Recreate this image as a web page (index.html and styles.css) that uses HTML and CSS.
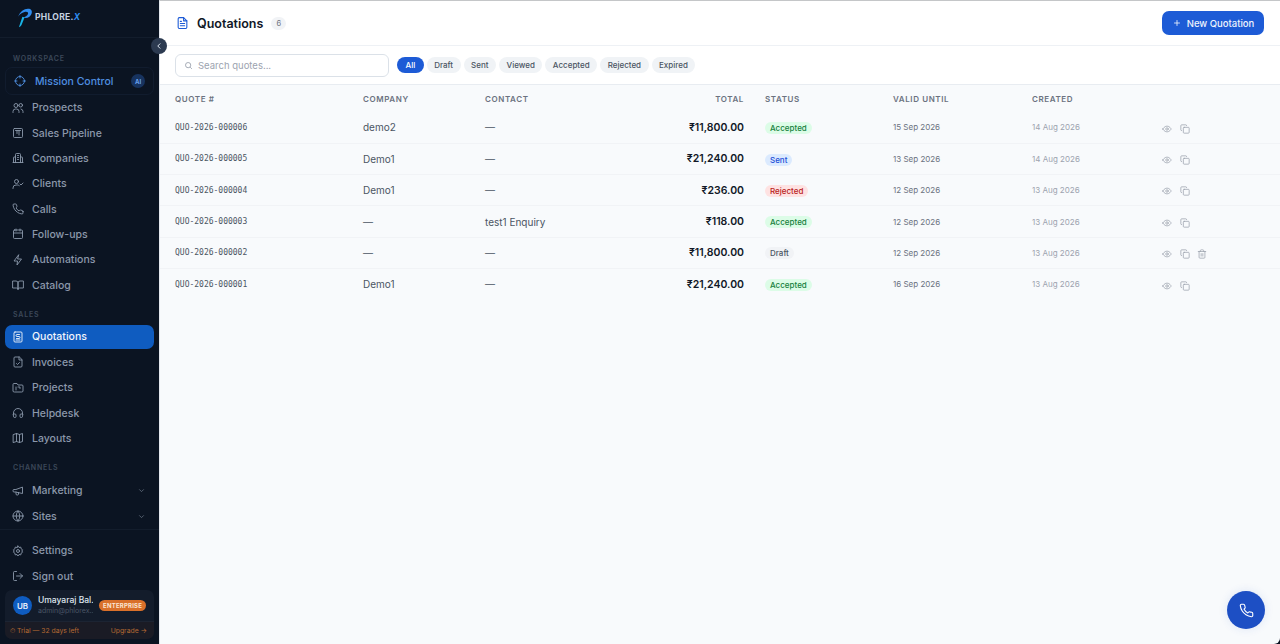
FILE: index.html
```html
<!DOCTYPE html>
<html lang="en">
<head>
    <meta charset="UTF-8">
    <meta name="viewport" content="width=device-width, initial-scale=1.0">
    <title>Quotations</title>
    <link rel="stylesheet" href="styles.css">
</head>
<body>
    <svg class="defs" width="0" height="0">
        <symbol id="i-target" viewBox="0 0 24 24"><circle cx="12" cy="12" r="9"/><path d="M12 1v5M12 18v5M1 12h5M18 12h5"/></symbol>
        <symbol id="i-users" viewBox="0 0 24 24"><circle cx="8" cy="7" r="4"/><path d="M2 21v-2a5 5 0 0 1 5-5h2a5 5 0 0 1 5 5v2"/><circle cx="17.5" cy="6.5" r="3.5"/><path d="M18 14a5 5 0 0 1 4 5v2"/></symbol>
        <symbol id="i-pipeline" viewBox="0 0 24 24"><rect x="3" y="3" width="18" height="18" rx="2"/><path d="M7 7h10M10 7v6M14 7v9"/></symbol>
        <symbol id="i-building" viewBox="0 0 24 24"><path d="M7 21V5a2 2 0 0 1 2-2h6a2 2 0 0 1 2 2v16M7 10H4a1 1 0 0 0-1 1v10M17 10h3a1 1 0 0 1 1 1v10M2 21h20M11 7h2M11 11h2M11 15h2"/></symbol>
        <symbol id="i-usercheck" viewBox="0 0 24 24"><circle cx="9" cy="7" r="4"/><path d="M2 21v-1a6 6 0 0 1 6-6h3a6 6 0 0 1 3.5 1.2M16 12l2 2 4-4"/></symbol>
        <symbol id="i-phone" viewBox="0 0 24 24"><path d="M22 16.9v3a2 2 0 0 1-2.2 2 19.8 19.8 0 0 1-8.6-3.1 19.5 19.5 0 0 1-6-6A19.8 19.8 0 0 1 2.1 4.2 2 2 0 0 1 4.1 2h3a2 2 0 0 1 2 1.7c.1 1 .4 1.9.7 2.8a2 2 0 0 1-.5 2.1L8.1 9.9a16 16 0 0 0 6 6l1.3-1.3a2 2 0 0 1 2.1-.4c.9.3 1.8.6 2.8.7a2 2 0 0 1 1.7 2z"/></symbol>
        <symbol id="i-calendar" viewBox="0 0 24 24"><rect x="3" y="4" width="18" height="17" rx="2"/><path d="M8 2v4M16 2v4M3 10h18"/></symbol>
        <symbol id="i-bolt" viewBox="0 0 24 24"><path d="M13 2 4 14h7l-1 8 9-12h-7z"/></symbol>
        <symbol id="i-book" viewBox="0 0 24 24"><path d="M2 4h6a4 4 0 0 1 4 4v13a3 3 0 0 0-3-3H2zM22 4h-6a4 4 0 0 0-4 4v13a3 3 0 0 1 3-3h7z"/></symbol>
        <symbol id="i-quote" viewBox="0 0 24 24"><path d="M6 2h12a2 2 0 0 1 2 2v16a2 2 0 0 1-2 2H6a2 2 0 0 1-2-2V4a2 2 0 0 1 2-2z"/><path d="M15 7H10a2 2 0 0 0 0 4h4a2 2 0 0 1 0 4H9M8 18h8"/></symbol>
        <symbol id="i-invoice" viewBox="0 0 24 24"><path d="M14 2H6a2 2 0 0 0-2 2v16a2 2 0 0 0 2 2h12a2 2 0 0 0 2-2V8z"/><path d="M14 2v6h6M9 15l2 2 4-4"/></symbol>
        <symbol id="i-folder" viewBox="0 0 24 24"><path d="M20 20a2 2 0 0 0 2-2V8a2 2 0 0 0-2-2h-8L10 3H4a2 2 0 0 0-2 2v13a2 2 0 0 0 2 2z"/><path d="M8 10v6M12 10h4v3"/></symbol>
        <symbol id="i-headset" viewBox="0 0 24 24"><path d="M3 14v-2a9 9 0 0 1 18 0v2"/><path d="M3 14h3a2 2 0 0 1 2 2v3a2 2 0 0 1-2 2H5a2 2 0 0 1-2-2zM21 14h-3a2 2 0 0 0-2 2v3a2 2 0 0 0 2 2h1a2 2 0 0 0 2-2z"/></symbol>
        <symbol id="i-map" viewBox="0 0 24 24"><path d="M3 5l6-2 6 2 6-2v16l-6 2-6-2-6 2zM9 3v16M15 5v16"/></symbol>
        <symbol id="i-megaphone" viewBox="0 0 24 24"><path d="M21 5v12L7 14H4a2 2 0 0 1-2-2v-1a2 2 0 0 1 2-2h3z"/><path d="M8 14v4a2 2 0 0 0 2 2h1a2 2 0 0 0 2-2v-3"/></symbol>
        <symbol id="i-globe" viewBox="0 0 24 24"><circle cx="12" cy="12" r="10"/><path d="M2 12h20M12 2a15 15 0 0 1 0 20M12 2a15 15 0 0 0 0 20"/></symbol>
        <symbol id="i-gear" viewBox="0 0 24 24"><circle cx="12" cy="12" r="3"/><path d="M12 2l2 3 3.5-.8.8 3.5 3 2-1.8 2.3 1.8 2.3-3 2-.8 3.5L14 19l-2 3-2-3-3.5.8-.8-3.5-3-2L4.500 12 2.700 9.700l3-2 .8-3.500L10 5z"/></symbol>
        <symbol id="i-signout" viewBox="0 0 24 24"><path d="M9 21H5a2 2 0 0 1-2-2V5a2 2 0 0 1 2-2h4M16 17l5-5-5-5M21 12H9"/></symbol>
        <symbol id="i-chevron" viewBox="0 0 24 24"><path d="m6 9 6 6 6-6"/></symbol>
        <symbol id="i-eye" viewBox="0 0 24 24"><path d="M2 12s3.600-7 10-7 10 7 10 7-3.600 7-10 7-10-7-10-7z"/><circle cx="12" cy="12" r="3"/></symbol>
        <symbol id="i-copy" viewBox="0 0 24 24"><rect x="8" y="8" width="14" height="14" rx="2"/><path d="M4 16a2 2 0 0 1-2-2V4a2 2 0 0 1 2-2h10a2 2 0 0 1 2 2"/></symbol>
        <symbol id="i-trash" viewBox="0 0 24 24"><path d="M3 6h18M19 6v14a2 2 0 0 1-2 2H7a2 2 0 0 1-2-2V6M8 6V4a2 2 0 0 1 2-2h4a2 2 0 0 1 2 2v2M10 11v6M14 11v6"/></symbol>
    </svg>

    <div class="container">

        <!-- sidebar -->
        <aside class="sidebar">
            <div class="brand">
                <svg class="brand-mark" viewBox="0 0 24 30">
                    <path d="M3 14C6 5 14 1 20 3c4 2 3 8-1 11-3 2-6 2-9 1 3-1 6-2 7-5 1-3-2-4-5-3-4 1-7 3-9 7z" fill="#2f8df0"/>
                    <path d="M9 14l-5 15c2-1 3-2 4-4l4-10z" fill="#19b5e8"/>
                </svg>
                <span class="brand-name">PHLORE.<em>X</em></span>
            </div>
            <button class="collapse-btn">
                <svg viewBox="0 0 24 24"><path d="m15 6-6 6 6 6"/></svg>
            </button>

            <div class="nav-scroll">
                <div class="nav-label first">WORKSPACE</div>
                <a class="mission">
                    <svg class="icon"><use href="#i-target"/></svg>
                    <span>Mission Control</span>
                    <b class="ai-badge">AI</b>
                </a>
                <a class="nav-item"><svg class="icon"><use href="#i-users"/></svg>Prospects</a>
                <a class="nav-item"><svg class="icon"><use href="#i-pipeline"/></svg>Sales Pipeline</a>
                <a class="nav-item"><svg class="icon"><use href="#i-building"/></svg>Companies</a>
                <a class="nav-item"><svg class="icon"><use href="#i-usercheck"/></svg>Clients</a>
                <a class="nav-item"><svg class="icon"><use href="#i-phone"/></svg>Calls</a>
                <a class="nav-item"><svg class="icon"><use href="#i-calendar"/></svg>Follow-ups</a>
                <a class="nav-item"><svg class="icon"><use href="#i-bolt"/></svg>Automations</a>
                <a class="nav-item"><svg class="icon"><use href="#i-book"/></svg>Catalog</a>

                <div class="nav-label">SALES</div>
                <a class="nav-item active"><svg class="icon"><use href="#i-quote"/></svg>Quotations</a>
                <a class="nav-item"><svg class="icon"><use href="#i-invoice"/></svg>Invoices</a>
                <a class="nav-item"><svg class="icon"><use href="#i-folder"/></svg>Projects</a>
                <a class="nav-item"><svg class="icon"><use href="#i-headset"/></svg>Helpdesk</a>
                <a class="nav-item"><svg class="icon"><use href="#i-map"/></svg>Layouts</a>

                <div class="nav-label">CHANNELS</div>
                <a class="nav-item"><svg class="icon"><use href="#i-megaphone"/></svg>Marketing<svg class="chev"><use href="#i-chevron"/></svg></a>
                <a class="nav-item"><svg class="icon"><use href="#i-globe"/></svg>Sites<svg class="chev"><use href="#i-chevron"/></svg></a>
            </div>

            <div class="nav-bottom">
                <a class="nav-item"><svg class="icon"><use href="#i-gear"/></svg>Settings</a>
                <a class="nav-item"><svg class="icon"><use href="#i-signout"/></svg>Sign out</a>
                <div class="user-card">
                    <div class="user-row">
                        <div class="avatar">UB</div>
                        <div class="user-text">
                            <div class="user-name">Umayaraj Bal...</div>
                            <div class="user-mail">admin@phlorex...</div>
                        </div>
                        <span class="plan">ENTERPRISE</span>
                    </div>
                    <div class="trial-row">
                        <span>⏱ Trial — 32 days left</span>
                        <span>Upgrade →</span>
                    </div>
                </div>
            </div>
        </aside>

        <!-- main -->
        <main class="main-content">
            <header class="page-head">
                <svg class="head-icon" viewBox="0 0 24 24"><path d="M14 2H6a2 2 0 0 0-2 2v16a2 2 0 0 0 2 2h12a2 2 0 0 0 2-2V8z"/><path d="M14 2v6h6M8 13h8M8 17h8M8 9h2"/></svg>
                <h1>Quotations</h1>
                <span class="count">6</span>
                <button class="new-btn"><svg viewBox="0 0 24 24"><path d="M12 5v14M5 12h14"/></svg>New Quotation</button>
            </header>

            <div class="filters">
                <div class="search">
                    <svg viewBox="0 0 24 24"><circle cx="11" cy="11" r="7"/><path d="m21 21-4.500-4.500"/></svg>
                    <span>Search quotes...</span>
                </div>
                <div class="chips">
                    <span class="chip on">All</span>
                    <span class="chip">Draft</span>
                    <span class="chip">Sent</span>
                    <span class="chip">Viewed</span>
                    <span class="chip">Accepted</span>
                    <span class="chip">Rejected</span>
                    <span class="chip">Expired</span>
                </div>
            </div>

            <div class="table-wrap">
                <table class="quotes">
                    <colgroup>
                        <col class="c-no"><col class="c-company"><col class="c-contact"><col class="c-total"><col class="c-status"><col class="c-valid"><col class="c-created"><col>
                    </colgroup>
                    <thead>
                        <tr><th>QUOTE #</th><th>COMPANY</th><th>CONTACT</th><th class="right">TOTAL</th><th>STATUS</th><th>VALID UNTIL</th><th>CREATED</th><th></th></tr>
                    </thead>
                    <tbody>
                        <tr><td class="no">QUO-2026-000006</td><td>demo2</td><td>—</td><td class="right total">₹11,800.00</td><td><span class="badge accepted">Accepted</span></td><td class="date">15 Sep 2026</td><td class="date light">14 Aug 2026</td><td class="acts"><svg><use href="#i-eye"/></svg><svg><use href="#i-copy"/></svg></td></tr>
                        <tr><td class="no">QUO-2026-000005</td><td>Demo1</td><td>—</td><td class="right total">₹21,240.00</td><td><span class="badge sent">Sent</span></td><td class="date">13 Sep 2026</td><td class="date light">14 Aug 2026</td><td class="acts"><svg><use href="#i-eye"/></svg><svg><use href="#i-copy"/></svg></td></tr>
                        <tr><td class="no">QUO-2026-000004</td><td>Demo1</td><td>—</td><td class="right total">₹236.00</td><td><span class="badge rejected">Rejected</span></td><td class="date">12 Sep 2026</td><td class="date light">13 Aug 2026</td><td class="acts"><svg><use href="#i-eye"/></svg><svg><use href="#i-copy"/></svg></td></tr>
                        <tr><td class="no">QUO-2026-000003</td><td>—</td><td>test1 Enquiry</td><td class="right total">₹118.00</td><td><span class="badge accepted">Accepted</span></td><td class="date">12 Sep 2026</td><td class="date light">13 Aug 2026</td><td class="acts"><svg><use href="#i-eye"/></svg><svg><use href="#i-copy"/></svg></td></tr>
                        <tr><td class="no">QUO-2026-000002</td><td>—</td><td>—</td><td class="right total">₹11,800.00</td><td><span class="badge draft">Draft</span></td><td class="date">12 Sep 2026</td><td class="date light">13 Aug 2026</td><td class="acts"><svg><use href="#i-eye"/></svg><svg><use href="#i-copy"/></svg><svg><use href="#i-trash"/></svg></td></tr>
                        <tr><td class="no">QUO-2026-000001</td><td>Demo1</td><td>—</td><td class="right total">₹21,240.00</td><td><span class="badge accepted">Accepted</span></td><td class="date">16 Sep 2026</td><td class="date light">13 Aug 2026</td><td class="acts"><svg><use href="#i-eye"/></svg><svg><use href="#i-copy"/></svg></td></tr>
                    </tbody>
                </table>
            </div>

            <button class="call-fab">
                <svg><use href="#i-phone"/></svg>
            </button>
        </main>
    </div>
</body>
</html>
```

FILE: styles.css
```css
* {
    margin: 0;
    padding: 0;
    box-sizing: border-box;
}

body {
    font-family: Inter, "Liberation Sans", sans-serif;
    height: 100vh;
    overflow: hidden;
    background: #0b1422;
}

.defs {
    position: absolute;
}

.container {
    display: flex;
    height: 644px;
}

/* ---------- sidebar ---------- */

.sidebar {
    width: 159px;
    flex-shrink: 0;
    background: #0b1422;
    color: #8b98ab;
    display: flex;
    flex-direction: column;
    position: relative;
}

.brand {
    height: 38px;
    display: flex;
    align-items: center;
    padding: 0 0 3px 16px;
    gap: 2px;
    border-bottom: 1px solid #131d2c;
}

.brand-mark {
    width: 17px;
    height: 21px;
}

.brand-name {
    font-size: 8.5px;
    font-weight: 700;
    letter-spacing: 0.3px;
    color: #c6d2e0;
}

.brand-name em {
    color: #2f8df0;
}

.collapse-btn {
    position: absolute;
    top: 38px;
    right: -8px;
    width: 16px;
    height: 16px;
    border: none;
    border-radius: 50%;
    background: #2c3a50;
    z-index: 5;
    display: flex;
    align-items: center;
    justify-content: center;
}

.collapse-btn svg {
    width: 10px;
    height: 10px;
    fill: none;
    stroke: #dbe3ee;
    stroke-width: 2.4;
}

.nav-scroll {
    flex: 1;
    padding: 0 5px;
}

.nav-label {
    font-size: 7px;
    font-weight: 600;
    letter-spacing: 0.8px;
    color: #3c4859;
    padding: 0 8px;
    height: 12px;
    line-height: 12px;
    margin-top: 11px;
    margin-bottom: 4px;
}

.nav-label.first {
    margin-top: 15px;
    margin-bottom: 2px;
}

.icon {
    width: 12px;
    height: 12px;
    flex-shrink: 0;
    fill: none;
    stroke: currentColor;
    stroke-width: 1.8;
    stroke-linecap: round;
    stroke-linejoin: round;
}

.nav-item {
    height: 25.35px;
    display: flex;
    align-items: center;
    gap: 8px;
    padding: 0 7px 0 7px;
    font-size: 10.5px;
    font-weight: 500;
    color: #8b98ab;
    white-space: nowrap;
}

.nav-item.active {
    height: 24px;
    background: #0f5cc0;
    color: #f1f5fb;
    border-radius: 7px;
    margin-bottom: 1px;
}

.mission {
    height: 28px;
    display: flex;
    align-items: center;
    gap: 9px;
    padding: 0 8px;
    margin-bottom: 0;
    border: 1px solid #111c2e;
    border-radius: 7px;
    font-size: 10.5px;
    font-weight: 500;
    color: #4f8fe0;
    white-space: nowrap;
}

.ai-badge {
    margin-left: auto;
    width: 14px;
    height: 14px;
    border-radius: 50%;
    background: #17335f;
    color: #6aa3ee;
    font-size: 6px;
    font-weight: 700;
    display: flex;
    align-items: center;
    justify-content: center;
}

.chev {
    width: 9px;
    height: 9px;
    margin-left: auto;
    margin-right: 1px;
    fill: none;
    stroke: #6b7787;
    stroke-width: 2;
}

.nav-bottom {
    border-top: 1px solid #131d2c;
    padding: 8px 5px 5px;
}

.user-card {
    margin-top: 1px;
    background: #131c2b;
    border-radius: 7px;
    height: 49px;
}

.user-row {
    height: 31px;
    display: flex;
    align-items: center;
    padding: 0 8px;
    gap: 6px;
}

.avatar {
    width: 19px;
    height: 19px;
    border-radius: 50%;
    background: #0f5cc0;
    color: #e8f0fb;
    font-size: 8px;
    font-weight: 600;
    display: flex;
    align-items: center;
    justify-content: center;
    flex-shrink: 0;
}

.user-text {
    width: 58px;
    overflow: hidden;
    white-space: nowrap;
}

.user-name {
    font-size: 8.5px;
    font-weight: 500;
    color: #dfe6ef;
    line-height: 11px;
}

.user-mail {
    font-size: 7px;
    color: #4a5566;
    line-height: 10px;
}

.plan {
    background: #d9702a;
    color: #fbe6d4;
    font-size: 6px;
    font-weight: 700;
    letter-spacing: 0.2px;
    padding: 2px 4px;
    border-radius: 6px;
    line-height: 7.500px;
    white-space: nowrap;
}

.trial-row {
    height: 18px;
    border-top: 1px solid #1c2433;
    background: #1a1b25;
    border-radius: 0 0 7px 7px;
    display: flex;
    justify-content: space-between;
    align-items: center;
    padding: 0 7px 0 5px;
    font-size: 6.800px;
    color: #b56a33;
}

/* ---------- main ---------- */

.main-content {
    flex: 1;
    position: relative;
    display: flex;
    flex-direction: column;
    background: #f8fafc;
    border-top: 1px solid #c4c6c8;
    border-left: 1px solid #e4e8ee;
    border-bottom-right-radius: 6px;
    overflow: hidden;
}

.page-head {
    height: 45px;
    flex-shrink: 0;
    display: flex;
    align-items: center;
    gap: 6px;
    padding: 0 16px 0 16px;
    background: #fff;
    border-bottom: 1px solid #eef1f5;
}

.head-icon {
    width: 13px;
    height: 14px;
    fill: none;
    stroke: #1d5bd6;
    stroke-width: 2;
    stroke-linecap: round;
    stroke-linejoin: round;
    margin-right: 2px;
}

.page-head h1 {
    font-size: 12.500px;
    font-weight: 600;
    color: #111827;
}

.count {
    width: 15px;
    height: 13px;
    margin-left: 2px;
    border-radius: 7px;
    background: #f1f3f6;
    color: #6b7280;
    font-size: 7.500px;
    display: flex;
    align-items: center;
    justify-content: center;
}

.new-btn {
    margin-left: auto;
    width: 102px;
    height: 24px;
    border: none;
    border-radius: 7px;
    background: #1d5bd6;
    color: #eef3fd;
    font-family: inherit;
    font-size: 9.500px;
    font-weight: 500;
    display: flex;
    align-items: center;
    justify-content: center;
    gap: 5px;
}

.new-btn svg {
    width: 10px;
    height: 10px;
    fill: none;
    stroke: #eef3fd;
    stroke-width: 2;
}

.filters {
    height: 39px;
    flex-shrink: 0;
    display: flex;
    align-items: center;
    gap: 8px;
    padding: 0 15px;
    background: #fff;
    border-bottom: 1px solid #e8ecf1;
}

.search {
    width: 214px;
    height: 23px;
    border: 1px solid #dbe1e8;
    border-radius: 6px;
    display: flex;
    align-items: center;
    gap: 5px;
    padding: 0 8px;
    font-size: 9.500px;
    color: #9ca3af;
}

.search svg {
    width: 9px;
    height: 9px;
    fill: none;
    stroke: #8b93a0;
    stroke-width: 2;
}

.chips {
    display: flex;
    gap: 3px;
}

.chip {
    height: 16px;
    padding: 0 7.500px;
    border-radius: 8px;
    background: #f0f3f6;
    color: #4b5563;
    font-size: 8px;
    font-weight: 500;
    line-height: 16px;
}

.chip.on {
    background: #1d5bd6;
    color: #fff;
    padding: 0 8.500px;
}

.table-wrap {
    flex: 1;
}

.quotes {
    width: 100%;
    table-layout: fixed;
    border-collapse: collapse;
}

.c-no { width: 188px; }
.c-company { width: 122px; }
.c-contact { width: 120px; }
.c-total { width: 160px; }
.c-status { width: 128px; }
.c-valid { width: 139px; }
.c-created { width: 130px; }

.quotes th {
    height: 27px;
    padding: 0 15px;
    text-align: left;
    font-size: 8px;
    font-weight: 600;
    letter-spacing: 0.6px;
    color: #6b7280;
}

.quotes td {
    height: 31.300px;
    padding: 0 15px;
    font-size: 10px;
    color: #4b5563;
    border-bottom: 1px solid #f1f3f6;
    white-space: nowrap;
}

.quotes tbody tr:last-child td {
    border-bottom: none;
}

.quotes .right {
    text-align: right;
    padding-right: 6px;
}

.quotes .no {
    font-family: "DejaVu Sans Mono", "Liberation Mono", monospace;
    font-size: 8px;
    color: #4b5563;
}

.quotes .total {
    font-size: 10.500px;
    font-weight: 600;
    color: #111827;
}

.quotes .date {
    font-size: 8px;
    color: #6b7280;
}

.quotes .light {
    color: #9ca3af;
}

.badge {
    display: inline-block;
    height: 12px;
    padding: 0 5px;
    border-radius: 6px;
    font-size: 8px;
    font-weight: 500;
    line-height: 13px;
    vertical-align: middle;
}

.accepted { background: #dcfce7; color: #15803d; }
.sent { background: #dbeafe; color: #1d4ed8; }
.rejected { background: #fee2e2; color: #b91c1c; }
.draft { background: #f1f3f6; color: #4b5563; }

.acts svg {
    width: 10px;
    height: 10px;
    margin-right: 7.500px;
    vertical-align: middle;
    fill: none;
    stroke: #9aa1ac;
    stroke-width: 1.800;
    stroke-linecap: round;
    stroke-linejoin: round;
}

.call-fab {
    position: absolute;
    right: 15px;
    bottom: 15px;
    width: 38px;
    height: 38px;
    border: none;
    border-radius: 50%;
    background: #1d4fc4;
    box-shadow: 0 0 10px rgba(29, 79, 196, 0.12);
    display: flex;
    align-items: center;
    justify-content: center;
}

.call-fab svg {
    width: 15px;
    height: 15px;
    fill: none;
    stroke: #fff;
    stroke-width: 1.800;
    stroke-linecap: round;
    stroke-linejoin: round;
}
```
